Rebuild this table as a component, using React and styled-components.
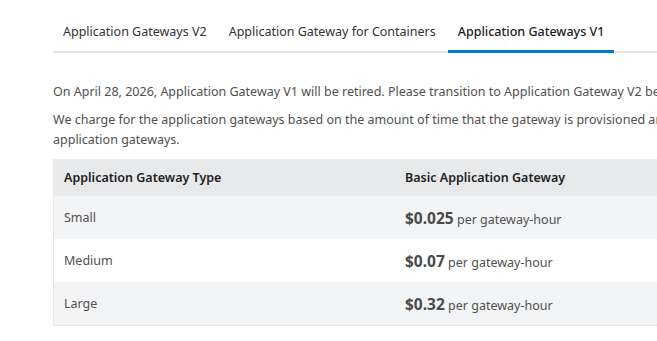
import React from 'react'
import styled, { createGlobalStyle } from 'styled-components';

const GlobalStyle = createGlobalStyle`
  body {
    margin: 0;
    background: #ffffff;
    font-family: "Noto Sans", "Open Sans", sans-serif;
    overflow: hidden;
  }
`

const Page = styled.div`
  width: 900px;
  padding: 0 0 0 53px;
`

const TabBar = styled.div`
  display: flex;
  gap: 2px;
  border-bottom: 2px solid #e6e6e6;
  height: 51px;
`

const Tab = styled.div`
  padding: 13px 10px 0;
  display: flex;
  align-items: center;
  font-size: 12.5px;
  color: ${p => (p.active ? '#1b1b1b' : '#323232')};
  font-weight: ${p => (p.active ? 500 : 400)};
  border-bottom: 3px solid ${p => (p.active ? '#0078d4' : 'transparent')};
  margin-bottom: -2px;
  white-space: nowrap;
`

const Body = styled.div`
  padding-top: 29px;
`

const Para = styled.p`
  margin: 0 0 8px;
  font-size: 12.5px;
  line-height: 20px;
  color: #505050;
  white-space: nowrap;
`

const Table = styled.div`
  margin-top: 9px;
  width: 760px;
  border-left: 1px solid #e6e6e6;
  border-bottom: 1px solid #e6e6e6;
`

const Row = styled.div`
  display: grid;
  grid-template-columns: 341px 1fr;
  align-items: center;
  height: ${p => (p.head ? '37px' : '43px')};
  background: ${p => (p.head ? '#e8e9ea' : p.shade ? '#f3f4f5' : '#ffffff')};
`

const Cell = styled.div`
  padding: 0 10px;
  font-size: 12.5px;
  color: ${p => (p.head ? '#1e1e1e' : '#505050')};
  font-weight: ${p => (p.head ? 600 : 400)};
  white-space: nowrap;
`

const Price = styled.span`
  font-size: 15.5px;
  font-weight: 700;
  color: #4a4a4a;
`

const Unit = styled.span`
  font-size: 12.5px;
  color: #505050;
`

const Note = styled.p`
  margin: 12px 0 0;
  font-size: 12.5px;
  color: #505050;
  white-space: nowrap;
`

const rows = [
  { size: 'Small', price: '$0.025' },
  { size: 'Medium', price: '$0.07' },
  { size: 'Large', price: '$0.32' },
]

export default function App() {
  return (
    <Page>
      <GlobalStyle />
      <TabBar>
        <Tab>Application Gateways V2</Tab>
        <Tab>Application Gateway for Containers</Tab>
        <Tab active>Application Gateways V1</Tab>
      </TabBar>
      <Body>
        <Para>
          On April 28, 2026, Application Gateway V1 will be retired. Please transition to Application Gateway V2 before that date.
        </Para>
        <Para>
          We charge for the application gateways based on the amount of time that the gateway is provisioned and available and the data processed by the
          <br />
          application gateways.
        </Para>
        <Table>
          <Row head>
            <Cell head>Application Gateway Type</Cell>
            <Cell head>Basic Application Gateway</Cell>
          </Row>
          {rows.map((r, i) => (
            <Row key={r.size} shade={i % 2 === 0}>
              <Cell>{r.size}</Cell>
              <Cell>
                <Price>{r.price}</Price> <Unit>per gateway-hour</Unit>
              </Cell>
            </Row>
          ))}
        </Table>
        <Note>(1) Outbound data transfer is charged at the regular data transfer rates.</Note>
      </Body>
    </Page>
  )
}
